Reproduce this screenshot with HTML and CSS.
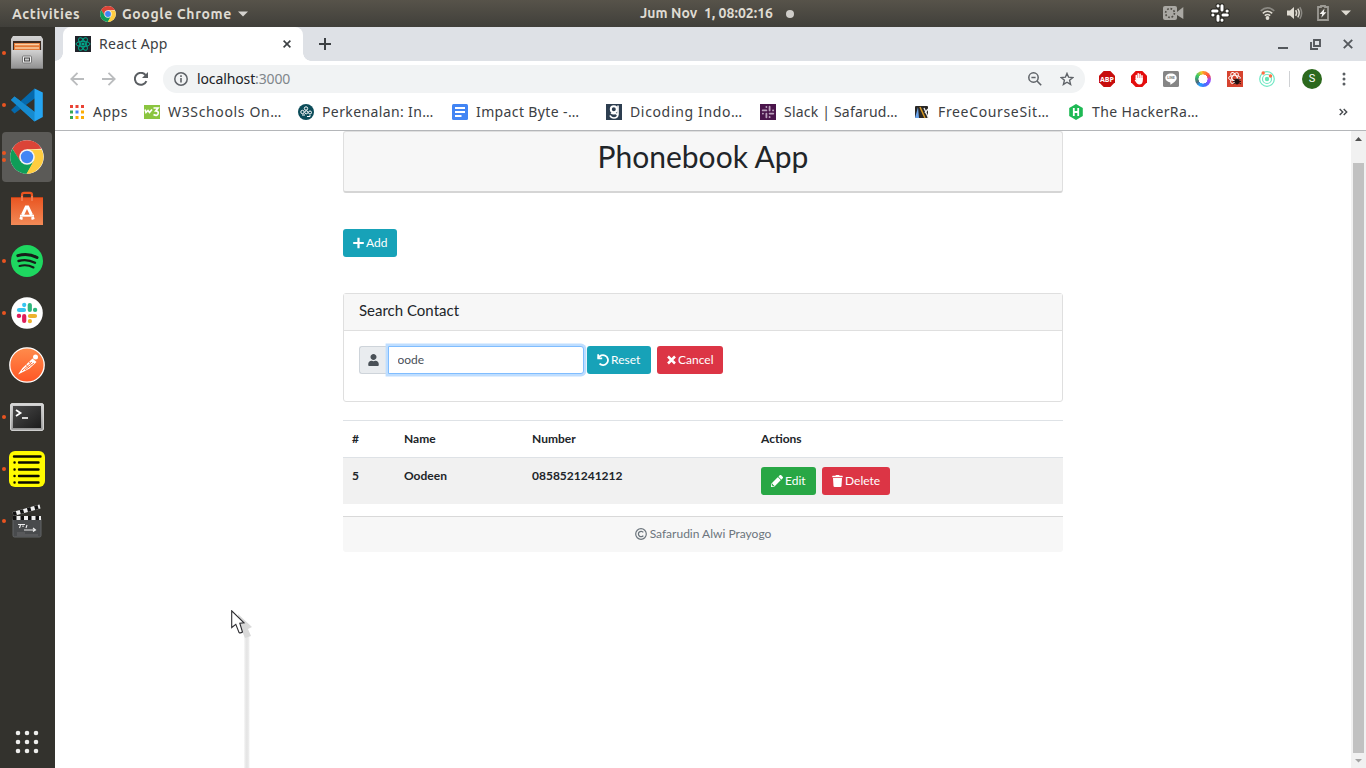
FILE: index.html
```html
<!DOCTYPE html>
<html lang="id">
<head>
<meta charset="utf-8">
<title>React App</title>
<link rel="stylesheet" href="styles.css">
</head>
<body>
<svg width="0" height="0" class="defs">
  <defs>
    <linearGradient id="metal" x1="0" y1="0" x2="0" y2="1"><stop offset="0" stop-color="#d2d2d2"/><stop offset="1" stop-color="#929292"/></linearGradient>
    <linearGradient id="bag" x1="0" y1="0" x2="0" y2="1"><stop offset="0" stop-color="#e95420"/><stop offset="1" stop-color="#f28a57"/></linearGradient>
    <linearGradient id="post" x1="0" y1="0" x2="0" y2="1"><stop offset="0" stop-color="#ff8c4c"/><stop offset="1" stop-color="#ff5625"/></linearGradient>
    <linearGradient id="screen" x1="0" y1="0" x2="1" y2="1"><stop offset="0" stop-color="#494949"/><stop offset="1" stop-color="#1c1c1c"/></linearGradient>
    <symbol id="chrome" viewBox="0 0 34 34">
      <circle cx="17" cy="17" r="16.8" fill="#fff"/>
      <path d="M2.4 8.7A16.8 16.8 0 0 1 31.6 8.7L17 9.4 9.8 20.8Z" fill="#db4437"/>
      <path d="M2.4 8.7A16.8 16.8 0 0 0 17 33.8L24 20.8 10.2 20.8Z" fill="#0f9d58"/>
      <path d="M31.6 9.4A16.8 16.8 0 0 1 16.5 33.8L24 20.6 17 9.4Z" fill="#ffcd40"/>
      <circle cx="17" cy="17" r="7.8" fill="#f4f4f4"/><circle cx="17" cy="17" r="6.2" fill="#4285f4"/>
    </symbol>
  </defs>
</svg>
<div class="desktop">
  <header class="topbar">
    <span class="activities">Activities</span>
    <svg class="top-chrome" width="16" height="16"><use href="#chrome"/></svg>
    <span class="app-menu">Google Chrome</span>
    <svg class="top-caret" width="10" height="6"><path d="M0 .5H10L5 5.5Z" fill="#d5d3cf"/></svg>
    <span class="clock">Jum Nov&nbsp; 1, 08:02:16</span>
    <i class="clock-dot"></i>
    <div class="indicators">
      <svg width="21" height="14" class="ind-cam" viewBox="0 0 21 14"><rect width="14" height="14" rx="2" fill="#aaa8a3"/><path d="M14 6L20.3 1V13L14 9Z" fill="#aaa8a3"/><circle cx="7" cy="7" r="4.4" fill="none" stroke="#504e47" stroke-width="1.7" stroke-dasharray="1.7 1.75"/></svg>
      <svg width="20" height="20" viewBox="0 0 20 20" class="ind-slack"><g fill="none" stroke-linecap="round"><path d="M12 2.7V7M7 8H2.7M8 13V17.3M13 12H17.3M8 2.7V3M17.2 8H17M12 17.2V17M2.8 12H3" stroke="#282722" stroke-width="5"/><path d="M12 2.7V7M7 8H2.7M8 13V17.3M13 12H17.3M8 2.7V3M17.2 8H17M12 17.2V17M2.8 12H3" stroke="#fff" stroke-width="3"/></g></svg>
      <svg width="15" height="13" viewBox="0 0 15 13" class="ind-wifi"><g fill="none" stroke="#dfdbd2" stroke-width="1.6"><path d="M.7 3.8Q7.5-2 14.3 3.8" stroke="#8b8983"/><path d="M2.8 6.3Q7.5 2.2 12.2 6.3M4.8 8.7Q7.5 6.3 10.2 8.7"/></g><circle cx="7.5" cy="11" r="1.9" fill="#dfdbd2"/></svg>
      <svg width="16" height="14" viewBox="0 0 16 14" class="ind-vol"><path d="M0 4.5H3L7 1V13L3 9.5H0Z" fill="#dfdbd2"/><g fill="none" stroke="#dfdbd2" stroke-width="1.5"><path d="M8.7 4.2Q10.5 7 8.7 9.8M10.8 2.7Q13.6 7 10.8 11.3"/><path d="M12.8 1.2Q16.5 7 12.8 12.8" stroke="#8b8983"/></g></svg>
      <svg width="12" height="16" viewBox="0 0 12 16" class="ind-bat"><path d="M4 2V1H8V2H11V15H1V2Z" fill="none" stroke="#9c9a94" stroke-width="1.8"/><path d="M7.5 3.5L2.6 9H5.2L4.3 12.7 9.4 7.2H6.8Z" fill="#f2f1ef"/></svg>
      <svg width="10" height="6"><path d="M0 .5H10L5 5.5Z" fill="#dfdbd2"/></svg>
    </div>
  </header>
  <div class="workspace">
    <nav class="dock">
      <div class="dock-item running"><svg width="36" height="36" viewBox="0 0 36 36"><path d="M4 1H32L34 4V34H2V4Z" fill="url(#metal)"/><path d="M4 6H32V16H4Z" fill="#3c2a20"/><path d="M5 8H31V15H5Z" fill="#e37735"/><path d="M6 9.5H30M6 13H30" stroke="#f9cfa4" stroke-width="1.5"/><path d="M3 15H33V33H3Z" fill="url(#metal)"/><path d="M2 33.5H34" stroke="#747474"/><rect x="13.5" y="21" width="9" height="7" rx="1" fill="#f1f1f1" stroke="#777"/><rect x="15.5" y="23" width="5" height="3" fill="#ccc" stroke="#444"/></svg></div>
      <div class="dock-item running"><svg width="34" height="34" viewBox="0 0 34 34"><path d="M1 12L4.500 8.500 26 25 24.500 33.500Z" fill="#168bd0"/><path d="M1 22L4.500 25.500 26 9.500 24.500.5Z" fill="#0569ac"/><path d="M1 12L4.500 8.500 26 25 24.500 33.500Z" fill="#168bd0"/><path d="M24.500.5L32.800 4.500V29L24.500 33.500Z" fill="#25a5f2"/></svg></div>
      <div class="dock-item running active"><i></i><svg width="34" height="34"><use href="#chrome"/></svg></div>
      <div class="dock-item"><svg width="34" height="36" viewBox="0 0 34 36"><path d="M12 8V4Q12 1.800 14 1.800H20Q22 1.800 22 4V8" fill="none" stroke="#e95420" stroke-width="2.200"/><path d="M1 6H33V34H1Z" fill="url(#bag)"/><path d="M1 6.500H33" stroke="#bd4117"/><path d="M12 10V5M22 10V5" stroke="#f0794c" stroke-width="2"/><path d="M12.500 24L16.200 16H17.800L21.500 24M11.500 26L10.800 28.500M22.500 26L23.200 28.500" fill="none" stroke="#fff" stroke-width="3"/><path d="M10 24.700H24" stroke="#fff" stroke-width="2"/></svg></div>
      <div class="dock-item running"><svg width="32" height="32" viewBox="0 0 32 32"><circle cx="16" cy="16" r="16" fill="#1ed760"/><g fill="none" stroke="#171d19" stroke-linecap="round"><path d="M6.800 10.600Q17 7.500 26 12.500" stroke-width="3"/><path d="M7.500 16Q16 13.500 24 17.800" stroke-width="2.400"/><path d="M8.500 21Q16 19 22.500 22.500" stroke-width="2"/></g></svg></div>
      <div class="dock-item running"><svg width="32" height="32" viewBox="0 0 32 32"><circle cx="16" cy="16" r="15.800" fill="#fff"/><g fill="none" stroke-width="4.200" stroke-linecap="round"><path d="M13.200 7.800V8.100M8 13H13" stroke="#36c5f0"/><path d="M18.800 8V13M24 12.900H24.200" stroke="#2eb67d"/><path d="M13.200 19V24M7.800 18.900H8.100" stroke="#e01e5a"/><path d="M19 19H24M18.900 24V24.200" stroke="#ecb22e"/></g></svg></div>
      <div class="dock-item"><svg width="36" height="36" viewBox="0 0 36 36"><circle cx="18" cy="18" r="17.200" fill="url(#post)" stroke="#fff" stroke-width="1.300"/><circle cx="26.500" cy="10" r="2.500" fill="#fff"/><path d="M23.500 11.500L27.500 15 20.500 21.500 16 24 9 27.500 13.500 21Z" fill="#fff"/><path d="M23 15L13 24M25 16L16 23M20 14.500L22.500 18M17 17.300L20 21" stroke="#ff733b"/></svg></div>
      <div class="dock-item running"><svg width="34" height="30" viewBox="0 0 34 30"><rect x=".7" y="1.700" width="32.600" height="26.600" rx="1" fill="url(#metal)" stroke="#eee"/><rect x="3" y="4" width="28" height="22" fill="url(#screen)"/><path d="M6 8L10.500 11 6 14" fill="none" stroke="#fff" stroke-width="1.800"/><path d="M12 16H18" stroke="#fff" stroke-width="1.600"/></svg></div>
      <div class="dock-item running"><svg width="36" height="36" viewBox="0 0 36 36"><rect width="36" height="36" rx="6" fill="#fffb00"/><g stroke="#0a0a00" stroke-width="2.400" stroke-linecap="round"><path d="M5 5.500H31.500M10 11.500H29.500M10 18.500H29.500M10 25H29.500M10 31.500H29.500M5.500 11.500H5.600M5.500 18.500H5.600M5.500 25H5.600M5.500 31.500H5.600"/></g></svg></div>
      <div class="dock-item running"><svg width="32" height="34" viewBox="0 0 32 34"><rect x="2" y="14" width="28" height="19" rx="1.500" fill="#494b4d" stroke="#636567"/><path d="M2 10L29 2.500" stroke="#eee" stroke-width="4"/><path d="M2 10L29 2.500" stroke="#111" stroke-width="4" stroke-dasharray="3.500 4"/><path d="M2 14H30" stroke="#eee" stroke-width="4"/><path d="M2 14H30" stroke="#111" stroke-width="4" stroke-dasharray="3.500 4"/><path d="M7 20.500H14M9.500 21L8.500 24M12 21.500V23M16 21L15 24M13 26H24M22 24L24.500 26 22 27.500" fill="none" stroke="#eee" stroke-width="1.100"/><path d="M6 29H14M6 31H27" stroke="#777" stroke-width=".7"/></svg></div>
      <div class="dock-item apps-grid"><svg width="24" height="24" viewBox="0 0 24 24"><g stroke="#eeeeec" stroke-width="4.600" stroke-linecap="round"><path d="M3 3H3.010M12 3H12.010M21 3H21.010M3 12H3.010M12 12H12.010M21 12H21.010M3 21H3.010M12 21H12.010M21 21H21.010"/></g></svg></div>
    </nav>
    <main class="window">
      <div class="tabstrip">
        <div class="tab">
          <svg width="16" height="16" viewBox="0 0 16 16"><rect width="16" height="16" fill="#20232a"/><g fill="none" stroke="#00a98b"><ellipse cx="8" cy="8" rx="7" ry="2.700"/><ellipse cx="8" cy="8" rx="7" ry="2.700" transform="rotate(60 8 8)"/><ellipse cx="8" cy="8" rx="7" ry="2.700" transform="rotate(120 8 8)"/></g><circle cx="8" cy="8" r="1.600" fill="#00a98b"/></svg>
          <span class="tab-title">React App</span>
          <svg class="tab-close" width="8" height="8" viewBox="0 0 8 8"><path d="M.6.6L7.400 7.400M7.400.6L.6 7.400" stroke="#3c4043" stroke-width="1.600"/></svg>
        </div>
        <svg class="newtab" width="12" height="12" viewBox="0 0 12 12"><path d="M6 0V12M0 6H12" stroke="#3c4043" stroke-width="2"/></svg>
        <div class="winbtns">
          <svg width="10" height="11" viewBox="0 0 10 11"><path d="M0 9H10" stroke="#54585d" stroke-width="2"/></svg>
          <svg width="11" height="11" viewBox="0 0 11 11"><path d="M4 1H10V7H4Z M1 3V10H8" fill="none" stroke="#54585d" stroke-width="1.900"/></svg>
          <svg width="10" height="10" viewBox="0 0 10 10"><path d="M.8.8L9.200 9.200M9.200.8L.8 9.200" stroke="#54585d" stroke-width="1.900"/></svg>
        </div>
      </div>
      <div class="toolbar">
        <svg width="14" height="14" viewBox="0 0 14 14"><path d="M14 7H1.500M7.500.8L1.300 7 7.500 13.200" fill="none" stroke="#babcbe" stroke-width="1.800"/></svg>
        <svg width="14" height="14" viewBox="0 0 14 14"><path d="M0 7H12.500M6.500.8L12.700 7 6.500 13.200" fill="none" stroke="#babcbe" stroke-width="1.800"/></svg>
        <svg width="14" height="14" viewBox="0 0 14 14"><path d="M12.400 9.200A6 6 0 1 1 11.500 3" fill="none" stroke="#5a5e62" stroke-width="2"/><path d="M14 0V6H8Z" fill="#5a5e62"/></svg>
        <div class="omnibox">
          <svg width="14" height="14" viewBox="0 0 14 14"><circle cx="7" cy="7" r="6.200" fill="none" stroke="#5f6368" stroke-width="1.500"/><path d="M7 6V10.500M7 3.300V4.900" stroke="#5f6368" stroke-width="1.600"/></svg>
          <span class="url">localhost<span>:3000</span></span>
          <svg class="zoomic" width="14" height="14" viewBox="0 0 14 14"><circle cx="5.500" cy="5.500" r="4.700" fill="none" stroke="#5f6368" stroke-width="1.500"/><path d="M9 9L13.200 13.200M3.400 5.500H7.600" stroke="#5f6368" stroke-width="1.600"/></svg>
          <svg width="14" height="14" viewBox="0 0 14 14"><path d="M7 1.400L8.600 5.200 12.800 5.600 9.600 8.300 10.600 12.400 7 10.200 3.400 12.400 4.400 8.300 1.200 5.600 5.400 5.200Z" fill="none" stroke="#5f6368" stroke-width="1.400"/></svg>
        </div>
        <div class="exts">
          <svg width="16" height="16" viewBox="0 0 16 16"><path d="M4.700 0H11.300L16 4.700V11.300L11.300 16H4.700L0 11.300V4.700Z" fill="#c70d0d"/><text x="8" y="10.800" text-anchor="middle" class="abp">ABP</text></svg>
          <svg width="16" height="16" viewBox="0 0 16 16"><path d="M4.700 0H11.300L16 4.700V11.300L11.300 16H4.700L0 11.300V4.700Z" fill="#e40d0d"/><path d="M5.300 8V4.500M7.200 7V2.800M9.100 7V3.200M11 8V4.700" stroke="#fff" stroke-width="1.500" stroke-linecap="round"/><path d="M4.600 7H11.800V10Q11.300 13.500 8.300 13.500 6 13.500 3.700 9.300L4.600 8.500 5.500 9.500Z" fill="#fff"/></svg>
          <svg width="16" height="16" viewBox="0 0 16 16"><rect width="16" height="16" rx="1.500" fill="#858585"/><path d="M8 2.500C4.600 2.500 2.300 4.500 2.300 7.100 2.300 9.400 4.300 11 7.300 11.400L7.400 13.800C10.500 12 13.700 9.800 13.700 7.100 13.700 4.500 11.400 2.500 8 2.500Z" fill="#fff"/><text x="8" y="8.400" text-anchor="middle" class="line">LINE</text></svg>
          <i class="colorring"></i>
          <svg width="16" height="16" viewBox="0 0 16 16"><rect width="16" height="16" fill="#d6432f"/><g fill="none" stroke="#fff" stroke-width=".9"><ellipse cx="7.500" cy="7" rx="6" ry="2.500"/><ellipse cx="7.500" cy="7" rx="6" ry="2.500" transform="rotate(60 7.500 7)"/><ellipse cx="7.500" cy="7" rx="6" ry="2.500" transform="rotate(120 7.500 7)"/></g><ellipse cx="10" cy="10.500" rx="2.300" ry="3" fill="#211"/><path d="M6.500 8L14 13M13.500 8L6.500 13M6 10.500H14" stroke="#211" stroke-width=".9"/></svg>
          <svg width="16" height="16" viewBox="0 0 16 16"><g fill="none" stroke="#70e8c4" stroke-width="1.200"><circle cx="8" cy="8" r="7.300"/><circle cx="8" cy="8" r="4.500"/></g><circle cx="8" cy="8" r="2.200" fill="#64e4b3"/><circle cx="4.200" cy="2" r="1.700" fill="#ff6d42"/><circle cx="11.500" cy="5" r="1.700" fill="#ff6d42"/></svg>
        </div>
        <i class="sep"></i>
        <span class="avatar">S</span>
        <svg class="kebab" width="4" height="14" viewBox="0 0 4 14"><circle cx="2" cy="2" r="1.500" fill="#5a5e62"/><circle cx="2" cy="7" r="1.500" fill="#5a5e62"/><circle cx="2" cy="12" r="1.500" fill="#5a5e62"/></svg>
      </div>
      <div class="bookmarks">
        <div class="bm bm-apps"><svg width="14" height="14" viewBox="0 0 14 14"><path d="M0 1.500H3M5.500 1.500H8.500M11 1.500H14" stroke="#ea4335" stroke-width="3"/><path d="M0 7H3M0 12.500H3" stroke="#34a853" stroke-width="3"/><path d="M5.500 7H8.500" stroke="#4285f4" stroke-width="3"/><path d="M11 7H14M5.500 12.500H8.500M11 12.500H14" stroke="#fbad05" stroke-width="3"/></svg><span>Apps</span></div>
        <div class="bm bm-wider"><svg width="16" height="16" viewBox="0 0 16 16"><rect y="1" width="16" height="14" fill="#8bc53f"/><path d="M1 5.500L2 8.500 4 6.500 5.500 8.500 8 5.500M9.500 4H14L11.700 7Q15 7 14 10 13 12.500 9.500 10.500" fill="none" stroke="#fff" stroke-width="1.700"/></svg><span>W3Schools On…</span></div>
        <div class="bm"><svg width="16" height="16" viewBox="0 0 16 16"><circle cx="8" cy="8" r="8" fill="#0c4c59"/><g fill="none" stroke="#fff" stroke-width="1"><circle cx="8" cy="4.500" r="1.700"/><circle cx="4.500" cy="8" r="1.700"/><circle cx="8.300" cy="8.300" r="1.500"/><circle cx="12" cy="8.500" r="1.500"/><path d="M12 11V12.500H9M4 11H7"/></g></svg><span>Perkenalan: In…</span></div>
        <div class="bm"><svg width="16" height="16" viewBox="0 0 16 16"><rect width="16" height="16" rx="1.500" fill="#4285f4"/><path d="M3 4H13M3 8H13M3 12H9.500" stroke="#fff" stroke-width="1.800"/></svg><span>Impact Byte -…</span></div>
        <div class="bm bm-wider"><svg width="16" height="16" viewBox="0 0 16 16"><rect width="16" height="16" fill="#2d3e50"/><circle cx="7.800" cy="5.200" r="3" fill="none" stroke="#fff" stroke-width="2"/><path d="M12 1.500V10.300Q11.500 14 8 14 5 14 4 11.500M5 8.800Q6.500 10 8.500 9.600 10 9 11.500 11" fill="none" stroke="#fff" stroke-width="1.600"/></svg><span>Dicoding Indo…</span></div>
        <div class="bm bm-slack"><svg width="16" height="16" viewBox="0 0 16 16"><rect width="16" height="16" fill="#4a154b"/><g fill="none" stroke="#bca2bd" stroke-width="1.800" stroke-linecap="round"><path d="M9.600 2.700V6.400M6.400 6.400H2.700M6.400 9.600V13.300M9.600 9.600H13.300M6.400 2.800V3M13.200 6.400H13M9.600 13.200V13M2.800 9.600H3"/></g></svg><span>Slack | Safarud…</span></div>
        <div class="bm bm-wider"><svg width="16" height="16" viewBox="0 0 16 16"><rect x="1" y="2" width="13" height="12" rx="1" fill="#292725"/><path d="M1 14L4 3 5 14Z" fill="#6ca4ea"/><path d="M6 3L11 14" stroke="#d99a24" stroke-width="1.500"/><path d="M10 4L14.500 14M14 5L11 9" stroke="#eee" stroke-width="1.300"/></svg><span>FreeCourseSit…</span></div>
        <div class="bm"><svg width="16" height="16" viewBox="0 0 16 16"><path d="M8 0L14.800 4V12L8 16 1.200 12V4Z" fill="#1eb954"/><path d="M5.800 4V12M10.200 4V12M5.800 8H10.200" stroke="#fff" stroke-width="1.800"/></svg><span>The HackerRa…</span></div>
        <svg class="more" width="9" height="8" viewBox="0 0 9 8"><path d="M.7 1L3.700 4 .7 7M4.700 1L7.700 4 4.700 7" fill="none" stroke="#45494d" stroke-width="1.400"/></svg>
      </div>
      <div class="viewport">
        <div class="page">
          <div class="title-card"><h1>Phonebook App</h1></div>
          <button class="btn info add"><svg width="11" height="12" viewBox="0 0 11 12"><path d="M5.500.7V11.300M.2 6H10.800" stroke="#fff" stroke-width="2.200"/></svg><span>Add</span></button>
          <section class="search-card">
            <h2>Search Contact</h2>
            <div class="search-row">
              <span class="prepend"><svg width="11" height="12" viewBox="0 0 448 512"><path fill="#495057" d="M224 256c70.700 0 128-57.300 128-128S294.700 0 224 0 96 57.300 96 128s57.300 128 128 128zm89.600 32h-16.700c-22.200 10.200-46.900 16-72.900 16s-50.600-5.800-72.900-16h-16.700C60.200 288 0 348.200 0 422.400V464c0 26.500 21.500 48 48 48h352c26.500 0 48-21.500 48-48v-41.600c0-74.200-60.200-134.400-134.400-134.400z"/></svg></span>
              <input class="field" type="text" value="oode">
              <button class="btn info reset"><svg width="12" height="12" viewBox="0 0 12 12"><path d="M1.300 4.300A5 5 0 1 1 2.500 9.700" fill="none" stroke="#fff" stroke-width="1.800"/><path d="M.3.3V5.200H5.200V3.600L2 3.600 2 .3Z" fill="#fff"/></svg><span>Reset</span></button>
              <button class="btn danger cancel"><svg width="9" height="10" viewBox="0 0 9 10"><path d="M1 1.500L8 8.500M8 1.500L1 8.500" stroke="#fff" stroke-width="2.500"/></svg><span>Cancel</span></button>
            </div>
          </section>
          <div class="table">
            <div class="tr head"><span>#</span><span>Name</span><span>Number</span><span>Actions</span></div>
            <div class="tr row"><span>5</span><span>Oodeen</span><span>0858521241212</span><span class="actions">
              <button class="btn success edit"><svg width="12" height="12" viewBox="0 0 512 512"><path fill="#fff" d="M497.900 142.100l-46.100 46.100c-4.700 4.700-12.300 4.700-17 0l-111-111c-4.700-4.700-4.700-12.300 0-17l46.100-46.100c18.700-18.700 49.100-18.700 67.900 0l60.100 60.100c18.800 18.700 18.800 49.100 0 67.900zM284.200 99.800L21.600 362.400.4 483.900c-2.900 16.400 11.400 30.600 27.800 27.800l121.500-21.300 262.600-262.600c4.700-4.700 4.700-12.300 0-17l-111-111c-4.800-4.700-12.400-4.700-17.100 0zM88 424h48v36.300l-64.500 11.300-31.100-31.100L51.700 376H88v48z"/></svg><span>Edit</span></button>
              <button class="btn danger delete"><svg width="11" height="12" viewBox="0 0 448 512"><path fill="#fff" d="M432 32H312l-9.400-18.700A24 24 0 0 0 281.100 0H166.800a23.700 23.700 0 0 0-21.400 13.300L136 32H16A16 16 0 0 0 0 48v32a16 16 0 0 0 16 16h416a16 16 0 0 0 16-16V48a16 16 0 0 0-16-16zM53.200 467a48 48 0 0 0 47.900 45h245.800a48 48 0 0 0 47.900-45L416 128H32z"/></svg><span>Delete</span></button>
            </span></div>
          </div>
          <footer class="foot"><svg width="12" height="12" viewBox="0 0 12 12"><circle cx="6" cy="6" r="5.300" fill="none" stroke="#6c757d" stroke-width="1.200"/><path d="M8.300 4.400A2.700 2.700 0 1 0 8.300 7.600" fill="none" stroke="#6c757d" stroke-width="1.300"/></svg><span>Safarudin Alwi Prayogo</span></footer>
        </div>
        <div class="scrollbar"><svg width="15" height="17"><path d="M4 10H11L7.500 6Z" fill="#505050"/></svg><i></i><svg width="15" height="15"><path d="M4 6H11L7.500 9.500Z" fill="#a3a3a3"/></svg></div>
      </div>
    </main>
  </div>
  <div class="pointer"><svg width="30" height="158" viewBox="0 0 30 158"><defs><linearGradient id="streak"><stop offset="0" stop-color="#f8f8f8"/><stop offset=".35" stop-color="#e5e5e5"/><stop offset=".7" stop-color="#e8e8e8"/><stop offset="1" stop-color="#fff"/></linearGradient></defs><rect x="13" y="26" width="6" height="132" fill="url(#streak)"/><path d="M7 4L21 17 17 19 20 26 14 28 11 21 9 20Z" fill="#d9d9d9"/><path d="M.7.8V17.500L4.800 14.300 8 22.500Q9.500 23.500 11.500 22L8.800 13.200 13 12.800Z" fill="#fff" stroke="#2c2c30" stroke-width="1.100"/></svg></div>
</div>
</body>
</html>
```
FILE: styles.css
```css
* { box-sizing: border-box; }
body { margin: 0; font-family: "Noto Sans", sans-serif; }
svg { display: block; flex: none; }
.defs { position: absolute; }
.desktop { position: relative; width: 1366px; height: 768px; overflow: hidden; display: flex; flex-direction: column; }
.topbar { height: 27px; flex: none; display: flex; align-items: center; background: linear-gradient(#57534a, #403f3a); color: #dfdbd2; font-family: Ubuntu, "Noto Sans", sans-serif; font-size: 14px; font-weight: 700; padding-left: 12px; white-space: nowrap; }
.activities { width: 88px; letter-spacing: .6px; }
.app-menu { width: 116px; margin-left: 6px; letter-spacing: .62px; flex: none; }
.clock { width: 144px; margin-left: 392px; padding-bottom: 2px; letter-spacing: .02px; }
.clock-dot { width: 8px; height: 8px; border-radius: 50%; background: #cfcdc9; margin-left: 2px; }
.indicators { margin-left: auto; display: flex; align-items: center; padding: 0 15px 1px 0; }
.ind-cam { margin-right: 26px; }
.ind-slack { margin-right: 30px; }
.ind-wifi { margin-right: 12px; }
.ind-vol { margin-right: 14px; }
.ind-bat { margin-right: 12px; }
.workspace { flex: 1; display: flex; min-height: 0; }
.dock { width: 55px; flex: none; display: flex; flex-direction: column; background: #33322d; }
.dock-item { height: 52px; flex: none; display: flex; align-items: center; justify-content: center; position: relative; padding-right: 1px; }
.dock-item.running::before { content: ""; position: absolute; left: 2px; top: 24px; width: 4px; height: 4px; border-radius: 50%; background: #e95420; }
.dock-item.active { margin: 1px 3px 1px 2px; height: 50px; border-radius: 4px; background: #5b5a57; padding: 0; }
.dock-item.active::before { left: 0; top: 19px; }
.dock-item.active i { position: absolute; left: 0; top: 26px; width: 4px; height: 4px; border-radius: 50%; background: #e95420; }
.apps-grid { margin-top: auto; height: 53px; }
.window { flex: 1; display: flex; flex-direction: column; background: #fff; min-width: 0; }
.tabstrip { height: 34px; flex: none; background: #dee1e6; display: flex; align-items: center; padding-left: 8px; }
.tab { position: relative; width: 240px; height: 34px; background: #fff; border-radius: 8px 8px 0 0; display: flex; align-items: center; padding: 0 12px; color: #3c4043; font-size: 14px; }
.tab::before, .tab::after { content: ""; position: absolute; bottom: 0; width: 8px; height: 8px; background: radial-gradient(circle at 0 0, transparent 7.5px, #fff 8px); }
.tab::before { left: -8px; }
.tab::after { right: -8px; transform: scaleX(-1); }
.tab-title { margin-left: 8px; padding-bottom: 2px; letter-spacing: .3px; }
.tab-close { margin-left: auto; }
.newtab { margin-left: 16px; }
.winbtns { margin-left: auto; padding-right: 13px; display: flex; align-items: center; gap: 22px; }
.toolbar { height: 36px; flex: none; display: flex; align-items: center; padding-left: 15px; gap: 18px; }
.omnibox { width: 922px; height: 28px; border-radius: 14px; background: #f1f3f4; display: flex; align-items: center; padding: 0 11px; margin-left: -3px; font-size: 14px; }
.url { margin-left: 9px; padding-bottom: 2px; color: #202124; letter-spacing: -.12px; }
.url span { color: #80868b; }
.zoomic { margin-left: auto; margin-right: 18px; }
.exts { display: flex; gap: 16px; margin-left: -4px; }
.abp { font: 700 7px "Open Sans", sans-serif; fill: #fff; }
.line { font: 700 3.500px Roboto, sans-serif; fill: #777; }
.colorring { width: 16px; height: 16px; border-radius: 50%; background: radial-gradient(circle, #fff 4.300px, transparent 4.800px), conic-gradient(#ff9c28, #ff4b3e 60deg, #9b4dff 100deg, #466cff 160deg, #21a3ff 210deg, #4b687c 240deg, #35cb68 300deg, #f5c928 350deg, #ff9c28); }
.sep { width: 1px; height: 16px; background: #cfd1d4; margin-left: -4px; }
.avatar { width: 20px; height: 20px; border-radius: 50%; background: #2c691d; color: #fff; font-family: Roboto, sans-serif; font-size: 11px; text-align: center; line-height: 20px; margin-left: -6px; }
.kebab { margin-left: 2px; }
.bookmarks { height: 34px; flex: none; border-bottom: 1px solid #b4b6b9; display: flex; align-items: center; padding: 0 18px 3px 14px; color: #3c4043; font-size: 14px; white-space: nowrap; }
.bm { width: 154px; flex: none; display: flex; align-items: center; gap: 8px; letter-spacing: .38px; }
.bm span { padding-bottom: 2px; }
.bm.bm-apps { width: 75px; gap: 9px; padding-left: 1px; letter-spacing: .5px; }
.bm-wider { letter-spacing: .65px; }
.bm-slack { letter-spacing: .2px; }
.more { margin-left: auto; }
.viewport { flex: 1; display: flex; min-height: 0; font-family: Lato, sans-serif; color: #212529; }
.page { flex: 1; padding-left: 288px; display: flex; flex-direction: column; align-items: flex-start; }
.title-card { width: 720px; height: 62px; border: 1px solid #dfdfdf; border-bottom: 2px solid #d5d5d5; border-radius: 3px; background: #f7f7f7; text-align: center; }
h1 { margin: 0; font-size: 30px; font-weight: 400; line-height: 36px; padding-top: 6px; }
.btn { border: 0; border-radius: 3px; height: 28px; display: flex; align-items: center; gap: 3px; padding: 0 0 1px 9.500px; margin: 0; color: #fff; font: 400 12px Lato, sans-serif; }
.info { background: #17a2b8; }
.danger { background: #dc3545; }
.success { background: #28a745; }
.add { width: 54px; margin-top: 36px; }
.btn span { margin-left: -.5px; }
.search-card { width: 720px; height: 109px; margin-top: 36px; border: 1px solid #dfdfdf; border-radius: 3px; }
h2 { margin: 0; height: 37px; border-bottom: 1px solid #dfdfdf; background: #f7f7f7; padding-left: 15px; font-size: 15px; font-weight: 400; line-height: 32px; }
.search-row { display: flex; padding: 15px 0 0 15px; }
.prepend { width: 29px; height: 28px; background: #e9ecef; border: 1px solid #ced4da; border-right: 0; border-radius: 3px 0 0 3px; display: flex; align-items: center; padding-left: 8px; }
.field { width: 196px; height: 28px; border: 1px solid #80bdff; border-radius: 0 3px 3px 0; outline: 0; box-shadow: 0 0 0 2.400px #bfdeff; padding: 0 8.500px 1px; font: 12px Lato, sans-serif; color: #495057; }
.reset { width: 64px; margin-left: 3px; }
.cancel { width: 66px; margin-left: 6px; }
.table { width: 720px; margin-top: 18px; font-size: 12px; font-weight: 700; }
.tr { display: grid; grid-template-columns: 52px 128px 229px 302px; padding-left: 9px; }
.head { height: 38px; border-top: 1px solid #dee2e6; border-bottom: 1px solid #dee2e6; line-height: 35px; }
.row { height: 46px; background: #f1f1f1; line-height: 36px; }
.actions { display: flex; gap: 6px; padding-top: 9px; }
.edit { width: 55px; }
.delete { width: 68px; }
.foot { width: 720px; height: 36px; margin-top: 12px; padding-bottom: 1.500px; background: #f7f7f7; border-top: 1px solid #d9d9d9; border-radius: 0 0 3px 3px; display: flex; align-items: center; justify-content: center; gap: 3px; color: #6c757d; font-size: 12px; }
.scrollbar { width: 15px; background: #f1f1f1; display: flex; flex-direction: column; align-items: center; }
.scrollbar i { width: 11px; height: 590px; margin-top: 15px; background: #c1c1c1; }
.pointer { position: absolute; left: 231px; top: 610px; }
```
